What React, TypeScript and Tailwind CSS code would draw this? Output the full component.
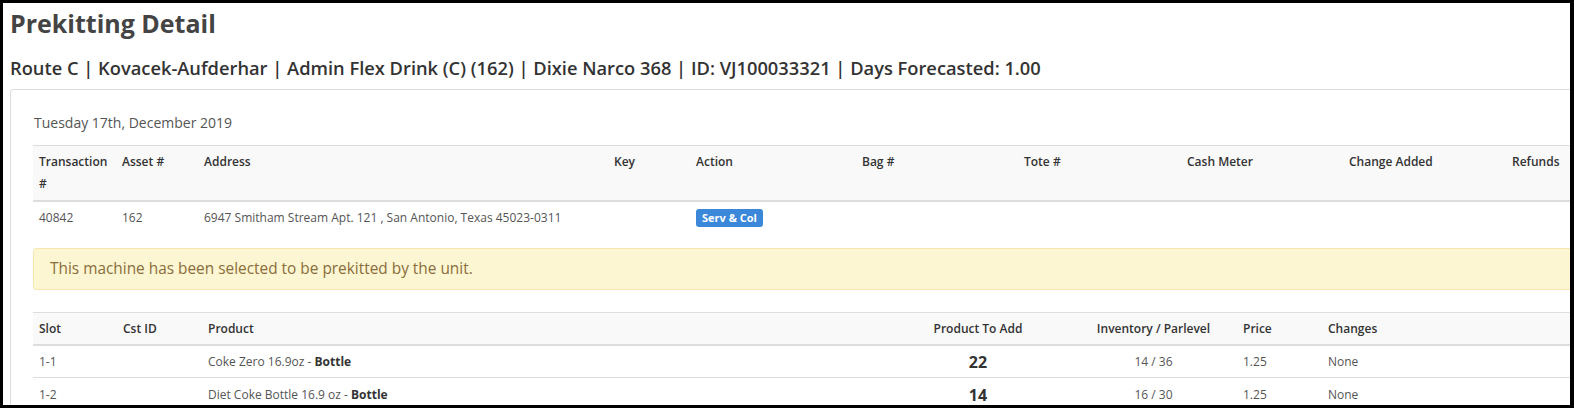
import React from "react";

const font = { fontFamily: '"Open Sans", "Liberation Sans", sans-serif' };

export default function App() {
  const products = [
    { slot: "1-1", name: "Coke Zero 16.9oz", type: "Bottle", add: "22", inv: "14 / 36", price: "1.25", changes: "None" },
    { slot: "1-2", name: "Diet Coke Bottle 16.9 oz", type: "Bottle", add: "14", inv: "16 / 30", price: "1.25", changes: "None" },
  ];
  return (
    <div
      className="w-[1574px] h-[408px] overflow-hidden bg-white border-l-[3px] border-t-[3px] border-r-[4px] border-b-[3px] border-black text-[#555]"
      style={font}
    >
      <div className="pl-[7px]">
        <h1 className="text-[25px] font-bold text-[#444] leading-[32px] pt-[4px]">Prekitting Detail</h1>
        <h2 className="text-[18.3px] font-semibold text-[#333] leading-[24px] mt-[17px]">
          Route C | Kovacek-Aufderhar | Admin Flex Drink (C) (162) | Dixie Narco 368 | ID: VJ100033321 | Days Forecasted: 1.00
        </h2>
        <div className="mt-[9px] w-[1600px] border border-[#ddd] rounded-[3px] pl-[22px] pt-[23px]">
          <div className="text-[14px] leading-[20px] text-[#555] pl-[1px]">Tuesday 17th, December 2019</div>
          <table className="mt-[12px] border-collapse text-[12px] w-[1560px] table-fixed">
            <colgroup>
              <col className="w-[83px]" />
              <col className="w-[82px]" />
              <col className="w-[410px]" />
              <col className="w-[82px]" />
              <col className="w-[166px]" />
              <col className="w-[162px]" />
              <col className="w-[163px]" />
              <col className="w-[162px]" />
              <col className="w-[163px]" />
              <col />
            </colgroup>
            <thead>
              <tr className="bg-[#f9f9f9] border-t border-b-2 border-[#ddd] text-[#333] font-semibold">
                {["Transaction #", "Asset #", "Address", "Key", "Action", "Bag #", "Tote #", "Cash Meter", "Change Added", "Refunds"].map((h) => (
                  <th
                    key={h}
                    className="text-left align-top font-semibold leading-[22px] pt-[5px] pb-[5px] px-[6px]"
                  >
                    {h}
                  </th>
                ))}
              </tr>
            </thead>
            <tbody>
              <tr className="h-[32px]">
                <td className="px-[6px]">40842</td>
                <td className="px-[6px]">162</td>
                <td className="px-[6px]">6947 Smitham Stream Apt. 121 , San Antonio, Texas 45023-0311</td>
                <td className="px-[6px]"></td>
                <td className="px-[6px]">
                  <span className="inline-block bg-[#3b87d9] text-white font-bold text-[11px] leading-[18px] px-[6px] rounded-[3px]">
                    Serv &amp; Col
                  </span>
                </td>
                <td></td>
                <td></td>
                <td></td>
                <td></td>
                <td></td>
              </tr>
            </tbody>
          </table>
          <div className="mt-[15px] w-[1560px] h-[42px] flex items-center bg-[#fcf6d2] border border-[#f7e6b0] rounded-[3px] pl-[16px] text-[15.4px] text-[#8a6d3b]">
            This machine has been selected to be prekitted by the unit.
          </div>
          <table className="mt-[22px] border-collapse text-[12px] w-[1560px] table-fixed">
            <colgroup>
              <col className="w-[84px]" />
              <col className="w-[85px]" />
              <col className="w-[684px]" />
              <col className="w-[184px]" />
              <col className="w-[167px]" />
              <col className="w-[85px]" />
              <col />
            </colgroup>
            <thead>
              <tr className="bg-[#f9f9f9] border-t border-b-2 border-[#ddd] text-[#333]">
                <th className="text-left font-semibold px-[6px] h-[32px] pt-[2px]">Slot</th>
                <th className="text-left font-semibold px-[6px] pt-[2px]">Cst ID</th>
                <th className="text-left font-semibold px-[6px] pt-[2px]">Product</th>
                <th className="text-center font-semibold px-[6px] pt-[2px]">Product To Add</th>
                <th className="text-center font-semibold px-[6px] pt-[2px]">Inventory / Parlevel</th>
                <th className="text-left font-semibold px-[6px] pt-[2px]">Price</th>
                <th className="text-left font-semibold px-[6px] pt-[2px]">Changes</th>
              </tr>
            </thead>
            <tbody>
              {products.map((p) => (
                <tr key={p.slot} className="border-b border-[#ddd] h-[33px]">
                  <td className="px-[6px] pt-[2px]">{p.slot}</td>
                  <td className="px-[6px]"></td>
                  <td className="px-[6px] pt-[2px]">
                    {p.name} - <b className="font-bold text-[#333]">{p.type}</b>
                  </td>
                  <td className="px-[6px] text-center text-[16px] font-bold text-[#333] pt-[2px]">{p.add}</td>
                  <td className="px-[6px] text-center pt-[2px]">{p.inv}</td>
                  <td className="px-[6px] pt-[2px]">{p.price}</td>
                  <td className="px-[6px] pt-[2px]">{p.changes}</td>
                </tr>
              ))}
            </tbody>
          </table>
        </div>
      </div>
    </div>
  );
}
